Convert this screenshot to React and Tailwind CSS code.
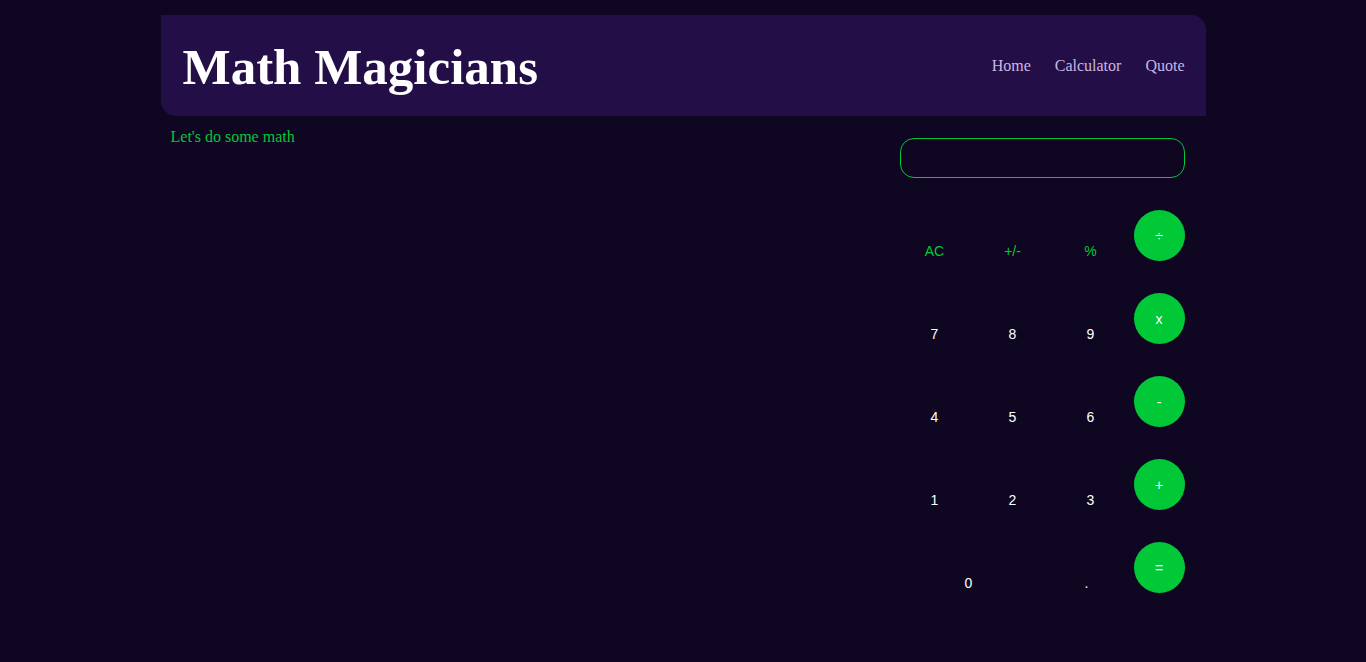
const ROWS = [
  { keys: ['AC', '+/-', '%'], op: '÷', muted: true },
  { keys: ['7', '8', '9'], op: 'x' },
  { keys: ['4', '5', '6'], op: '-' },
  { keys: ['1', '2', '3'], op: '+' },
]

function Key({ label, muted, width = 'w-[78px]' }) {
  return (
    <button className={`${width} h-[51px] pt-[31px] pl-[2px] text-[14px] leading-none ${muted ? 'text-[#00c837]' : 'text-white'}`}>
      {label}
    </button>
  )
}

function OpKey({ label }) {
  return (
    <button className="w-[51px] h-[51px] rounded-full bg-[#00c837] text-white text-[14px] leading-none flex items-center justify-center">
      {label}
    </button>
  )
}

export default function App() {
  return (
    <div className="min-h-[662px] bg-[#0f0722] font-['Liberation_Serif',serif]">
      <div className="w-[1045px] mx-auto pt-[15px]">
        {/* Header */}
        <header className="h-[101px] bg-[#230e47] rounded-tr-[15px] rounded-bl-[15px] flex items-center justify-between pl-[22px] pr-[21px]">
          <h1 className="text-[51px] font-bold text-white leading-none pt-[3px]">Math Magicians</h1>
          <nav className="flex gap-[24px] text-[16px] text-[#c9b8e2] pt-[1px]">
            <a>Home</a>
            <a>Calculator</a>
            <a>Quote</a>
          </nav>
        </header>

        <div className="flex justify-between">
          <p className="pl-[10px] pt-[12px] text-[16px] text-[#00c837] leading-[18px]">Let's do some math</p>

          {/* Calculator */}
          <div className="w-[311px] pt-[22px] pr-[21px] font-['Liberation_Sans',Arial,sans-serif]">
            <div className="ml-[5px] h-[40px] border border-[#00c837] rounded-[14px]"></div>
            <div className="mt-[32px] flex flex-col gap-[32px]">
              {ROWS.map(r => (
                <div key={r.op} className="flex items-start">
                  {r.keys.map(k => <Key key={k} label={k} muted={r.muted} />)}
                  <div className="ml-[5px]"><OpKey label={r.op} /></div>
                </div>
              ))}
              <div className="flex items-start">
                <Key label="0" width="w-[146px]" />
                <Key label="." width="w-[90px]" />
                <div className="ml-[3px]"><OpKey label="=" /></div>
              </div>
            </div>
          </div>
        </div>
      </div>
    </div>
  )
}
